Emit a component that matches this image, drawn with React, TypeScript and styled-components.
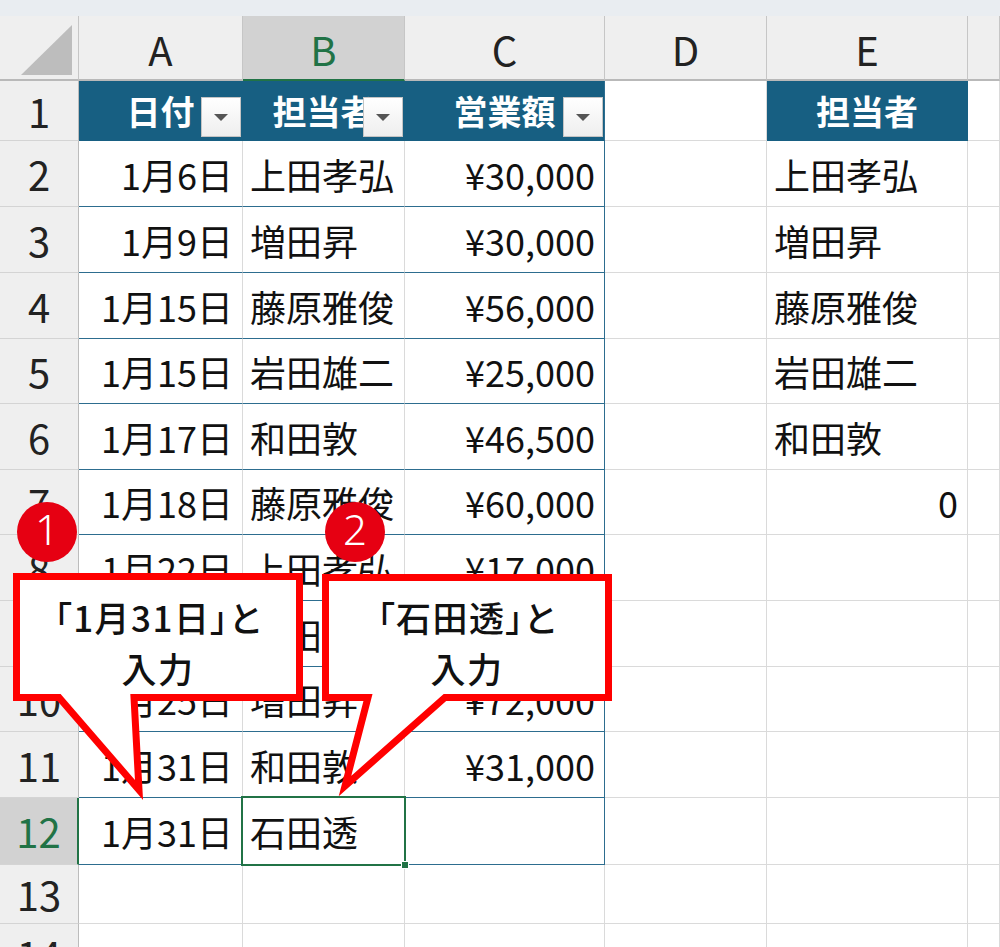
import React from 'react';
import styled, { createGlobalStyle, css } from 'styled-components';

const HEAD_BLUE = '#175f82';
const LINE_BLUE = '#2d6d8f';
const GRID = '#dadada';
const GREEN = '#217346';
const HDR_BG = '#efefef';
const RED = '#ff0000';

const GlobalStyle = createGlobalStyle`
  html, body { margin: 0; padding: 0; background: #fff; }
  body {
    width: 1000px; height: 947px; overflow: hidden;
    font-family: "Noto Sans CJK JP", "Noto Sans", sans-serif;
  }
`;

const rowHeights = [65, 60, 66, 66, 66, 65, 66, 65, 66, 66, 65, 66, 67, 59, 60];

const Page = styled.div`
  position: relative;
  width: 1000px;
  height: 947px;
  overflow: hidden;
  background: #fff;
`;

const TopBand = styled.div`
  height: 16px;
  background: #e9edf1;
`;

const Sheet = styled.div`
  display: grid;
  grid-template-columns: 79px 164px 162px 200px 162px 201px 32px;
  grid-template-rows: ${rowHeights.map((h) => `${h}px`).join(' ')};
`;

const Corner = styled.div`
  position: relative;
  background: ${HDR_BG};
  border-right: 1px solid #c6c6c6;
  border-bottom: 2px solid #b9b9b9;
  &::after {
    content: '';
    position: absolute;
    right: 6px;
    bottom: 4px;
    width: 51px;
    height: 50px;
    background: #bdbdbd;
    clip-path: polygon(100% 0, 100% 100%, 0 100%);
  }
`;

const ColHeader = styled.div<{ $selected?: boolean }>`
  display: flex;
  align-items: center;
  justify-content: center;
  box-sizing: border-box;
  background: ${(p) => (p.$selected ? '#d2d2d2' : HDR_BG)};
  border-right: 1px solid #c6c6c6;
  border-bottom: 2px solid ${(p) => (p.$selected ? GREEN : '#b9b9b9')};
  color: ${(p) => (p.$selected ? GREEN : '#222')};
  font-family: "Noto Sans CJK JP", "Noto Sans", sans-serif;
  font-size: 40px;
  font-weight: 400;
  padding-top: 2px;
`;

const RowHeader = styled.div<{ $selected?: boolean }>`
  display: flex;
  align-items: center;
  justify-content: center;
  box-sizing: border-box;
  background: ${(p) => (p.$selected ? '#d2d2d2' : HDR_BG)};
  border-right: ${(p) => (p.$selected ? `2px solid ${GREEN}` : '1px solid #bcbcbc')};
  border-bottom: 1px solid #d4d4d4;
  color: ${(p) => (p.$selected ? GREEN : '#222')};
  font-size: 40px;
  overflow: hidden;
`;

type Line = 'grid' | 'blue' | 'head';
const lineColor = (l: Line) => (l === 'blue' ? LINE_BLUE : l === 'head' ? HEAD_BLUE : GRID);

const Cell = styled.div<{
  $align?: 'left' | 'right' | 'center';
  $head?: boolean;
  $right?: Line;
  $bottom?: Line;
  $active?: boolean;
}>`
  position: relative;
  display: flex;
  align-items: center;
  box-sizing: border-box;
  min-width: 0;
  white-space: nowrap;
  font-size: 36px;
  color: #111;
  padding: 0 9px 0 7px;
  justify-content: ${(p) =>
    p.$align === 'right' ? 'flex-end' : p.$align === 'center' ? 'center' : 'flex-start'};
  border-right: 1px solid ${(p) => lineColor(p.$right || 'grid')};
  border-bottom: 1px solid ${(p) => lineColor(p.$bottom || 'grid')};
  ${(p) =>
    p.$head &&
    css`
      background: ${HEAD_BLUE};
      color: #fff;
      font-weight: 700;
      font-size: 34px;
      padding: 0;
    `}
  ${(p) =>
    p.$active &&
    css`
      z-index: 2;
      &::after {
        content: '';
        position: absolute;
        top: -2px;
        left: -2px;
        right: -2px;
        bottom: -2px;
        border: 2px solid ${GREEN};
        pointer-events: none;
      }
    `}
`;

const FillHandle = styled.span`
  position: absolute;
  right: -5px;
  bottom: -5px;
  width: 8px;
  height: 8px;
  background: ${GREEN};
  border: 1px solid #fff;
  box-sizing: border-box;
  z-index: 3;
`;

const FilterButton = styled.span`
  position: absolute;
  right: 1px;
  bottom: 3px;
  width: 40px;
  height: 40px;
  box-sizing: border-box;
  border: 1px solid #c4c4c4;
  background: linear-gradient(#ffffff, #eeeeee);
  display: flex;
  align-items: center;
  justify-content: center;
  &::before {
    content: '';
    width: 0;
    height: 0;
    border-left: 7px solid transparent;
    border-right: 7px solid transparent;
    border-top: 7px solid #555;
  }
`;

const Badge = styled.div<{ $x: number; $y: number }>`
  position: absolute;
  left: ${(p) => p.$x}px;
  top: ${(p) => p.$y}px;
  width: 60px;
  height: 60px;
  border-radius: 50%;
  background: #e60012;
  color: #fff;
  display: flex;
  align-items: center;
  justify-content: center;
  font-family: "Noto Sans", "DejaVu Sans", sans-serif;
  font-size: 42px;
  font-weight: 300;
  line-height: 1;
  padding-bottom: 6px;
  box-sizing: border-box;
  z-index: 7;
`;

const CalloutLayer = styled.svg`
  position: absolute;
  left: 0;
  top: 0;
  z-index: 5;
  pointer-events: none;
`;

const CalloutText = styled.div<{ $x: number; $y: number; $w: number }>`
  position: absolute;
  left: ${(p) => p.$x}px;
  top: ${(p) => p.$y}px;
  width: ${(p) => p.$w}px;
  z-index: 6;
  display: flex;
  flex-direction: column;
  align-items: center;
  font-family: "Noto Sans CJK JP", sans-serif;
  font-size: 35px;
  font-weight: 500;
  font-feature-settings: "palt";
  letter-spacing: 1.5px;
  line-height: 51px;
  color: #111;
  white-space: nowrap;
`;

type Row = {
  n: number;
  a: string;
  b: string;
  c: string;
  e?: string;
  eRight?: boolean;
  active?: boolean;
};

const rows: Row[] = [
  { n: 2, a: '1月6日', b: '上田孝弘', c: '¥30,000', e: '上田孝弘' },
  { n: 3, a: '1月9日', b: '増田昇', c: '¥30,000', e: '増田昇' },
  { n: 4, a: '1月15日', b: '藤原雅俊', c: '¥56,000', e: '藤原雅俊' },
  { n: 5, a: '1月15日', b: '岩田雄二', c: '¥25,000', e: '岩田雄二' },
  { n: 6, a: '1月17日', b: '和田敦', c: '¥46,500', e: '和田敦' },
  { n: 7, a: '1月18日', b: '藤原雅俊', c: '¥60,000', e: '0', eRight: true },
  { n: 8, a: '1月22日', b: '上田孝弘', c: '¥17,000' },
  { n: 9, a: '1月23日', b: '岩田雄二', c: '¥18,000' },
  { n: 10, a: '1月25日', b: '増田昇', c: '¥72,000' },
  { n: 11, a: '1月31日', b: '和田敦', c: '¥31,000' },
  { n: 12, a: '1月31日', b: '石田透', c: '', active: true },
];

export default function App() {
  return (
    <Page>
      <GlobalStyle />
      <TopBand />
      <Sheet>
        <Corner />
        <ColHeader>A</ColHeader>
        <ColHeader $selected>B</ColHeader>
        <ColHeader>C</ColHeader>
        <ColHeader>D</ColHeader>
        <ColHeader>E</ColHeader>
        <ColHeader />

        <RowHeader>1</RowHeader>
        <Cell $head $align="center" $right="head" $bottom="head">
          日付<FilterButton />
        </Cell>
        <Cell $head $align="center" $right="head" $bottom="head">
          担当者<FilterButton />
        </Cell>
        <Cell $head $align="center" $right="blue" $bottom="head">
          営業額<FilterButton />
        </Cell>
        <Cell />
        <Cell $head $align="center" $right="head" $bottom="head">
          担当者
        </Cell>
        <Cell />

        {rows.map((r) => (
          <React.Fragment key={r.n}>
            <RowHeader $selected={r.active}>{r.n}</RowHeader>
            <Cell $align="right" $bottom="blue">
              {r.a}
            </Cell>
            <Cell $bottom="blue" $active={r.active}>
              {r.b}
              {r.active && <FillHandle />}
            </Cell>
            <Cell $align="right" $bottom="blue" $right="blue">
              {r.c}
            </Cell>
            <Cell />
            <Cell $align={r.eRight ? 'right' : 'left'}>{r.e}</Cell>
            <Cell />
          </React.Fragment>
        ))}

        {[13, 14].map((n) => (
          <React.Fragment key={n}>
            <RowHeader>{n}</RowHeader>
            <Cell />
            <Cell />
            <Cell />
            <Cell />
            <Cell />
            <Cell />
          </React.Fragment>
        ))}
      </Sheet>

      <CalloutLayer width={1000} height={947} viewBox="0 0 1000 947">
        <path
          d="M16.5 576.5 H299.5 V697.5 H134 L139 790 L59 697.5 H16.5 Z"
          fill="#fff"
          stroke={RED}
          strokeWidth={7}
          strokeLinejoin="miter"
          strokeMiterlimit={10}
        />
        <path
          d="M325.5 577.5 H608.5 V697.5 H445 L345 786 L368 697.5 H325.5 Z"
          fill="#fff"
          stroke={RED}
          strokeWidth={7}
          strokeLinejoin="miter"
          strokeMiterlimit={10}
        />
      </CalloutLayer>

      <CalloutText $x={13} $y={591} $w={290}>
        <span>「1月31日」と</span>
        <span>入力</span>
      </CalloutText>
      <CalloutText $x={322} $y={591} $w={290}>
        <span>「石田透」と</span>
        <span>入力</span>
      </CalloutText>

      <Badge $x={17} $y={502}>1</Badge>
      <Badge $x={325} $y={502}>2</Badge>
    </Page>
  );
}
